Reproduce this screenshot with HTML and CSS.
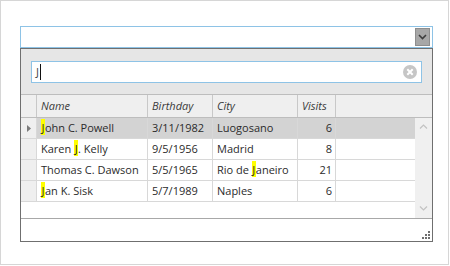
FILE: index.html
```html
<!DOCTYPE html>
<html>
<head>
<meta charset="utf-8">
<link rel="stylesheet" href="styles.css">
</head>
<body>
<div class="frame">
  <div class="combo">
    <div class="dd-btn">
      <svg width="9" height="6" viewBox="0 0 9 6"><path d="M1 1 L4.5 4.5 L8 1" fill="none" stroke="#3c3c3c" stroke-width="1.6"/></svg>
    </div>
  </div>
  <div class="popup">
    <div class="search-area">
      <div class="search">
        <span class="typed">J</span><span class="caret"></span>
        <svg class="clear" width="14" height="14" viewBox="0 0 14 14"><circle cx="7" cy="7" r="7" fill="#c6c6c6"/><path d="M4.3 4.3 L9.7 9.7 M9.7 4.3 L4.3 9.7" stroke="#fff" stroke-width="2"/></svg>
      </div>
    </div>
    <div class="grid">
      <div class="row hdr">
        <div class="cell ind"></div>
        <div class="cell c-name">Name</div>
        <div class="cell c-bday">Birthday</div>
        <div class="cell c-city">City</div>
        <div class="cell c-vis">Visits</div>
        <div class="fill"></div>
      </div>
      <div class="body">
        <div class="rows">
          <div class="row sel">
            <div class="cell ind"><svg width="4" height="7" viewBox="0 0 4 7"><path d="M0 0 L4 3.5 L0 7 Z" fill="#7a7a7a"/></svg></div>
            <div class="cell c-name"><span class="hl">J</span>ohn C. Powell</div>
            <div class="cell c-bday">3/11/1982</div>
            <div class="cell c-city">Luogosano</div>
            <div class="cell c-vis num">6</div>
            <div class="fill"></div>
          </div>
          <div class="row">
            <div class="cell ind"></div>
            <div class="cell c-name">Karen <span class="hl">J</span>. Kelly</div>
            <div class="cell c-bday">9/5/1956</div>
            <div class="cell c-city">Madrid</div>
            <div class="cell c-vis num">8</div>
            <div class="fill"></div>
          </div>
          <div class="row">
            <div class="cell ind"></div>
            <div class="cell c-name">Thomas C. Dawson</div>
            <div class="cell c-bday">5/5/1965</div>
            <div class="cell c-city">Rio de <span class="hl">J</span>aneiro</div>
            <div class="cell c-vis num">21</div>
            <div class="fill"></div>
          </div>
          <div class="row">
            <div class="cell ind"></div>
            <div class="cell c-name"><span class="hl">J</span>an K. Sisk</div>
            <div class="cell c-bday">5/7/1989</div>
            <div class="cell c-city">Naples</div>
            <div class="cell c-vis num">6</div>
            <div class="fill"></div>
          </div>
        </div>
        <div class="vscroll">
          <svg width="9" height="5" viewBox="0 0 9 5"><path d="M1 4.5 L4.5 1 L8 4.5" fill="none" stroke="#c2c2c2" stroke-width="1.2"/></svg>
          <svg width="9" height="5" viewBox="0 0 9 5"><path d="M1 0.5 L4.5 4 L8 0.5" fill="none" stroke="#c2c2c2" stroke-width="1.2"/></svg>
        </div>
      </div>
    </div>
    <div class="footer">
      <svg class="grip" width="8" height="8" viewBox="0 0 8 8">
        <rect x="6" y="0" width="2" height="2" fill="#6e6e6e"/>
        <rect x="3" y="3" width="2" height="2" fill="#6e6e6e"/>
        <rect x="6" y="3" width="2" height="2" fill="#6e6e6e"/>
        <rect x="0" y="6" width="2" height="2" fill="#6e6e6e"/>
        <rect x="3" y="6" width="2" height="2" fill="#6e6e6e"/>
        <rect x="6" y="6" width="2" height="2" fill="#6e6e6e"/>
      </svg>
    </div>
  </div>
</div>
</body>
</html>
```

FILE: styles.css
```css
* { box-sizing: border-box; }
html, body { margin: 0; padding: 0; background: #fff; }
body {
  font-family: "Segoe UI", "Open Sans", "Noto Sans", sans-serif;
  font-size: 11px;
  color: #2b2b2b;
}
.frame {
  width: 449px;
  height: 265px;
  border: 1px solid #d6d6d6;
  padding: 25px 0 0 19px;
}
.combo {
  width: 413px;
  height: 22px;
  border: 1px solid #8ec3e6;
  background: #fff;
  padding: 1px;
  display: flex;
  justify-content: flex-end;
}
.dd-btn {
  width: 15px;
  height: 18px;
  margin-right: 1px;
  background: #a7a7a7;
  border: 1px solid #8e8e8e;
  display: flex;
  align-items: center;
  justify-content: center;
}
.popup {
  width: 413px;
  height: 194px;
  border: 1px solid #6f6f6f;
  display: flex;
  flex-direction: column;
  background: #fff;
}
.search-area {
  background: #e6e6e6;
  padding: 12px 10px 11px 10px;
  height: 45px;
}
.search {
  height: 22px;
  border: 1px solid #8ec3e6;
  background: #fff;
  display: flex;
  align-items: center;
  padding-left: 4px;
  padding-right: 4px;
}
.typed { color: #444; line-height: 16px; }
.caret {
  width: 1px;
  height: 16px;
  background: #111;
  margin-left: 1px;
}
.clear { margin-left: auto; }
.grid {
  border-top: 1px solid #bdbdbd;
}
.row {
  display: flex;
  height: 21px;
  border-bottom: 1px solid #d8d8d8;
}
.row.hdr {
  height: 23px;
  background: #efefef;
  border-bottom: 1px solid #bdbdbd;
  font-style: italic;
  color: #3a3a3a;
}
.hdr .cell { border-right-color: #c8c8c8; }
.cell {
  border-right: 1px solid #d8d8d8;
  padding: 0 4px;
  line-height: 20px;
  white-space: nowrap;
  overflow: hidden;
}
.hdr .cell { line-height: 22px; }
.ind {
  width: 16px;
  padding: 0;
  background: #efefef;
  display: flex;
  align-items: center;
  justify-content: center;
}
.c-name { width: 111px; }
.c-bday { width: 65px; }
.c-city { width: 85px; }
.c-vis { width: 38px; }
.num { text-align: right; padding-right: 3px; }
.fill { flex: 1; }
.sel .cell:not(.ind), .sel .fill { background: #d3d3d3; }
.hl { background: #ffff00; padding: 1px 0.5px 0 0.5px; }
.body {
  display: flex;
  height: 101px;
  border-bottom: 1px solid #a8a8a8;
}
.rows { flex: 1; }
.vscroll {
  width: 17px;
  background: #f0f0f0;
  display: flex;
  flex-direction: column;
  align-items: center;
  justify-content: space-between;
  padding: 6px 0 7px 0;
}
.footer {
  flex: 1;
  display: flex;
  justify-content: flex-end;
  align-items: flex-end;
  padding: 0 2px 2px 0;
}
```
